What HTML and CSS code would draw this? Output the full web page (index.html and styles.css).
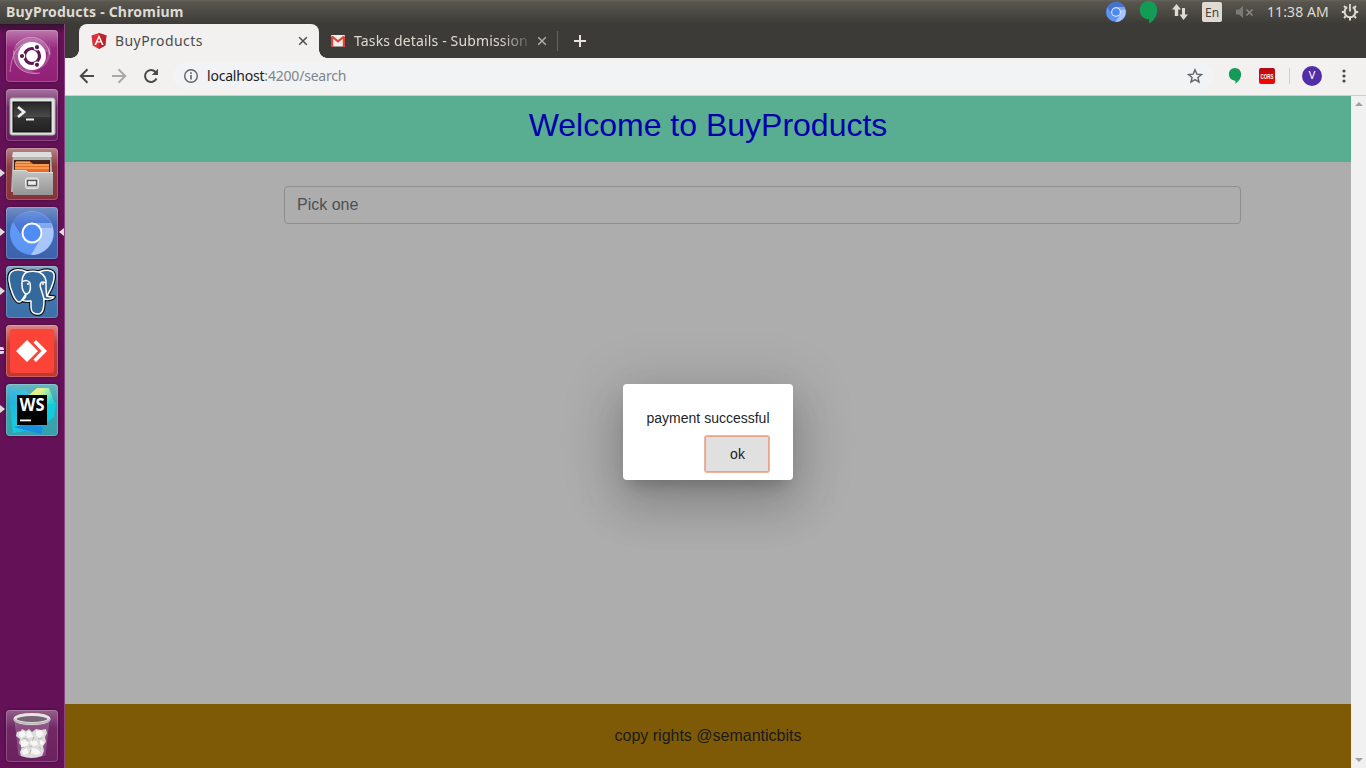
FILE: index.html
```html
<!DOCTYPE html>
<html lang="en">
<head>
<meta charset="utf-8">
<title>BuyProducts</title>
<link rel="stylesheet" href="styles.css">
</head>
<body>
<svg width="0" height="0" class="defs" aria-hidden="true">
  <defs>
    <linearGradient id="gloss" x1="0" y1="0" x2="0" y2="1"><stop offset="0" stop-color="#fff" stop-opacity=".4"/><stop offset=".35" stop-color="#fff" stop-opacity=".05"/><stop offset="1" stop-color="#fff" stop-opacity="0"/></linearGradient>
    <linearGradient id="screen" x1="0" y1="0" x2="0" y2="1"><stop offset="0" stop-color="#262626"/><stop offset=".5" stop-color="#4b4b4b"/><stop offset=".52" stop-color="#303030"/><stop offset="1" stop-color="#222"/></linearGradient>
    <linearGradient id="metal" x1="0" y1="0" x2="0" y2="1"><stop offset="0" stop-color="#c4c4c4"/><stop offset="1" stop-color="#959595"/></linearGradient>
    <linearGradient id="cyan" x1="0" y1="0" x2="1" y2="1"><stop offset="0" stop-color="#1fa0d8"/><stop offset=".5" stop-color="#12cfdc"/><stop offset="1" stop-color="#159be0"/></linearGradient>
    <linearGradient id="lemon" x1="0" y1="0" x2="1" y2=".8"><stop offset="0" stop-color="#f3ee6a"/><stop offset=".35" stop-color="#d6ee7a"/><stop offset=".7" stop-color="#1cd6d5"/></linearGradient>
    <symbol id="chromium" viewBox="0 0 44 44">
      <circle cx="22" cy="22" r="22" fill="#5b95f5"/>
      <path d="M3 11A22 22 0 0 1 41 12H22A10 10 0 0 0 13 27Z" fill="#4372d3"/>
      <path d="M41 12A22 22 0 0 1 21 44L31 27A10 10 0 0 0 22 12Z" fill="#a6c5fa"/>
      <path d="M22 12h19l1 5H31Z" fill="#7fa5ed"/>
      <circle cx="22" cy="22" r="10.500" fill="#fff"/><circle cx="22" cy="22" r="8.500" fill="#4a89f3"/>
    </symbol>
    <symbol id="hangouts" viewBox="0 0 20 24"><path d="M10 0C4.500 0 .8 4.200.8 9.500S4.800 19 10.700 19v4.500C16.500 20 19.200 14.500 19.200 9.500 19.200 4.200 15.500 0 10 0Z" fill="#149c57"/></symbol>
    <symbol id="close" viewBox="0 0 10 10"><path d="M1.200 1.200l7.600 7.600M8.800 1.200L1.200 8.800" fill="none" stroke="currentColor" stroke-width="1.500"/></symbol>
  </defs>
</svg>

<header class="menubar">
  <span class="window-title">BuyProducts - Chromium</span>
  <div class="indicators">
    <span class="slot"><svg width="20" height="20"><use href="#chromium"/></svg></span>
    <span class="slot"><svg width="19" height="23"><use href="#hangouts"/></svg></span>
    <span class="slot"><svg width="18" height="18" viewBox="0 0 18 18"><path d="M5.500 1L10 6.500H7.200V13H3.800V6.500H1ZM12.500 17L8.500 11.500h2.500V5h3v6.500h3Z" fill="#dfdbd2"/></svg></span>
    <span class="slot"><span class="lang">En</span></span>
    <span class="slot"><svg width="19" height="14" viewBox="0 0 19 14"><path d="M1 4.500h3l4-3.500v12L4 9.500H1Z" fill="#7c7a74"/><path d="M11.500 4.500l6 6M17.500 4.500l-6 6" stroke="#8b8983" stroke-width="1.500"/></svg></span>
    <time class="clock">11:38 AM</time>
    <svg class="gear" width="18" height="18" viewBox="0 0 18 18" fill="none" stroke="#dfdbd2"><path d="M6.200 4.200a5.400 5.400 0 1 0 5.600 0" stroke-width="2"/><path d="M9 1v7.500" stroke-width="1.800"/><path d="M3.200 9H.8M17.200 9h-2.400M4.700 13.300L3 15M13.300 13.300L15 15M9 15v2.500M4.700 4.700L3 3M13.300 4.700L15 3" stroke-width="2"/></svg>
  </div>
</header>

<div class="desktop">
  <nav class="launcher">
    <div class="tile tile-dash"><svg viewBox="0 0 52 52">
      <rect width="52" height="52" fill="url(#gloss)"/>
      <path d="M8 18C14 4 42 4 44 24L38 20C32 10 16 10 12 26Z" fill="#fff" opacity=".22"/>
      <path d="M43 14C50 32 32 46 18 39L28 40C38 38 42 30 43 14Z" fill="#fff" opacity=".2"/>
      <path d="M8 20C4 34 16 46 34 43 22 42 12 34 12 24Z" fill="#fff" opacity=".2"/>
      <g fill="none" stroke="#fff" opacity=".4"><path d="M10 15C20 2 42 6 44 25"/><path d="M8 20C5 36 18 46 34 43"/><path d="M4 42C6 22 12 14 25 12"/></g>
      <circle cx="26" cy="26" r="14" fill="#fff"/><circle cx="26" cy="26" r="7.500" fill="none" stroke="#5e1750" stroke-width="3.200"/>
      <g stroke="#fff" stroke-width="1.200"><path d="M29 20l4-6M19 26h-6M29 32l4 6"/><g fill="#5e1750"><circle cx="16" cy="26" r="2.700"/><circle cx="31" cy="17.200" r="2.700"/><circle cx="31" cy="34.800" r="2.700"/></g></g>
    </svg></div>
    <div class="tile tile-terminal"><svg viewBox="0 0 52 52">
      <rect width="52" height="52" fill="url(#gloss)"/><rect x="4" y="9" width="45" height="37" rx="2" fill="#e3e3df" stroke="#aaa"/><rect x="7" y="13" width="38" height="30" fill="url(#screen)" stroke="#111"/>
      <path d="M12 18l6 5-6 5" fill="none" stroke="#eee" stroke-width="2.800"/><path d="M20 30.500h8" stroke="#eee" stroke-width="2"/>
    </svg></div>
    <div class="tile tile-files running"><svg viewBox="0 0 52 52">
      <rect width="52" height="52" fill="url(#gloss)"/><path d="M7 4h38l2 40H5Z" fill="#b4b4b0"/><path d="M7 4h38l1 5H6Z" fill="#dededb"/><rect x="8" y="12" width="36" height="12" fill="#43251c"/><path d="M9 14h16l2 2h16v8H9Z" fill="#e96c20"/><path d="M9 17h34M9 20h34" stroke="#ffc98f"/><path d="M10 14h14" stroke="#ffe4b0"/><path d="M7 22h13l2 2h25v23H7Z" fill="url(#metal)"/><path d="M7 22.500h13l2 2h25" stroke="#ddd" fill="none"/>
      <rect x="19.500" y="30" width="13" height="10.500" rx="2" fill="#ccc" stroke="#e9e9e9"/><rect x="21.500" y="32.500" width="9" height="5" fill="#eee" stroke="#555" stroke-width="1.300"/>
    </svg></div>
    <div class="tile tile-chromium running active"><svg viewBox="0 0 52 52"><use href="#chromium" x="4" y="4" width="44" height="44"/><rect width="52" height="52" fill="url(#gloss)" opacity=".7"/></svg></div>
    <div class="tile tile-postgres running"><svg viewBox="0 0 52 52">
      <rect width="52" height="52" fill="url(#gloss)"/>
      <g stroke-linejoin="round" stroke-linecap="round"><path fill="#336a9b" stroke="#111" stroke-width="3.800" d="M25 35c0 7-1 12 6 13 6 1 7-6 7-15 4 1 9 0 10-2-3 0-5 0-7-1C46 22 52 7 45 5c-5-2-9 0-12 1-5-1-8-1-12 0C12 2 2 3 3 14c1 9 6 22 10 22 3 0 5-6 7-8 0 5-3 5-4 6 3 2 8 1 9 1Z"/>
      <g fill="none" stroke="#fff" stroke-width="1.500"><path fill="#336a9b" d="M25 35c0 7-1 12 6 13 6 1 7-6 7-15 4 1 9 0 10-2-3 0-5 0-7-1C46 22 52 7 45 5c-5-2-9 0-12 1-5-1-8-1-12 0C12 2 2 3 3 14c1 9 6 22 10 22 3 0 5-6 7-8 0 5-3 5-4 6 3 2 8 1 9 1Z"/><path d="M21 6c-6 3-5 10-5 13 0 5 2 9 5 9 3-1 4-5 3-11-2-3-5-3-8-1M33 6c6 3 8 8 7 14 0 4 0 7 1 10M40 17c-5-3-7 1-5 6 1 3 2 6 3 10"/></g><circle cx="22" cy="18" r="1" fill="#fff"/><circle cx="37" cy="18" r="1" fill="#fff"/></g>
    </svg></div>
    <div class="tile tile-anydesk double"><svg viewBox="0 0 52 52"><rect width="52" height="52" fill="url(#gloss)"/><rect x="4" y="4" width="44" height="44" rx="3" fill="#fc4338"/><path d="M10 26l11-11 11 11-11 11ZM27.500 17.500l2.500-2.500 11 11-11 11-2.500-2.500 8-8.500Z" fill="#fff"/></svg></div>
    <div class="tile tile-webstorm running"><svg viewBox="0 0 52 52">
      <path d="M2 4l16 2 9 6 9-8 8 12-4 22-4 12-17-3-12 2L5 31Z" fill="url(#cyan)"/><path d="M22 12L31 4h12l6 16-10 18Z" fill="url(#lemon)"/><path d="M41 21l9-3-2 15-8 6Z" fill="#0bcbdc"/><path d="M7 43l18-3 12 3-2 7Z" fill="#188ddd"/>
      <rect width="52" height="52" fill="url(#gloss)" opacity=".6"/><rect x="11" y="11" width="30" height="30" fill="#000"/><text x="26" y="27" text-anchor="middle" textLength="25" lengthAdjust="spacingAndGlyphs" class="ws">WS</text><rect x="14" y="35.500" width="11" height="1.800" fill="#fff"/>
    </svg></div>
    <div class="tile tile-trash"><svg viewBox="0 0 52 52">
      <rect width="52" height="52" fill="url(#gloss)" opacity=".7"/><path d="M9 10h34l-4 35q-13 4-26 0Z" fill="#e7d9e7" opacity=".22" stroke="#fff"/>
      <path d="M11 22l4-1 1-2 4 2 3-2 3 3 4-3 5 1 5-1 1 4-2 4 1 5-3 4 1 5-2 5q-10 4-21 0l-1-4 2-5-3-4 1-4-4-3Z" fill="#dcdcda"/>
      <g fill="#f6f6f4"><path d="M13 22l5-1 2 4-4 3-3-2ZM22 21l3 1 2 5-5 1-2-3ZM30 21l5-1 3 4-4 4-4-2ZM15 31l4-1 4 3-2 3-6 1ZM25 30l6 1 1 4-5 1-3-3ZM34 30l4 2-1 4-3-2ZM15 41l6-3 2 5-5 2ZM26 38l5 1 4 4-4 2-6-2Z"/></g>
      <g stroke="#b5b5b0" fill="none"><path d="M17 28l4 1 1 2M28 27l-2 4M32 29l4-1M23 37l3-1M33 37l2 2M23 44l2-4M15 38l3-1"/></g>
      <ellipse cx="26" cy="9" rx="17" ry="4.500" fill="#796378" stroke="#e4e4e0" stroke-width="3"/><path d="M8 9c2 6 34 6 36 0" fill="none" stroke="#b9b9b5" stroke-width="1.500"/>
    </svg></div>
  </nav>

  <main class="browser">
    <div class="tabstrip">
      <div class="tab tab-active">
        <svg class="favicon" width="16" height="16" viewBox="0 0 16 16"><path d="M8 0l7.500 2.600-1.200 10L8 16l-6.300-3.400L.5 2.600Z" fill="#dd3038"/><path d="M8 0l7.500 2.600-1.200 10L8 16Z" fill="#bd2530"/><path d="M8 1.800L3.400 12h1.700l1-2.400h3.800l1 2.400h1.700ZM8 5l1.300 3.200H6.700Z" fill="#fff" fill-rule="evenodd"/></svg>
        <span class="tab-title t1">BuyProducts</span>
        <svg class="tab-close" width="10" height="10"><use href="#close"/></svg>
      </div>
      <div class="tab tab-idle">
        <svg class="favicon" width="14" height="12" viewBox="0 0 14 12"><rect width="14" height="11.500" rx="1" fill="#eee"/><path d="M0 12V1.500L2 1l5 4 5-4 2 .5V12h-2.200V3.700L7 7.700 2.200 3.700V12Z" fill="#db4437"/></svg>
        <span class="tab-title t2">Tasks details - Submission</span>
        <svg class="tab-close" width="10" height="10"><use href="#close"/></svg>
      </div>
      <span class="tab-divider"></span>
      <svg class="new-tab" width="12" height="12" viewBox="0 0 12 12"><path d="M6 0v12M0 6h12" stroke="#e6e3dc" stroke-width="2"/></svg>
    </div>

    <div class="toolbar">
      <span class="slot"><svg width="16" height="16" viewBox="0 0 16 16" fill="none" stroke="#4a4a4a" stroke-width="2"><path d="M15 8H2M8.500 1.300L1.800 8l6.700 6.700"/></svg></span>
      <span class="slot"><svg width="16" height="16" viewBox="0 0 16 16" fill="none" stroke="#a8a8a8" stroke-width="2"><path d="M1 8h13M7.500 1.300L14.200 8l-6.700 6.700"/></svg></span>
      <span class="slot"><svg width="16" height="16" viewBox="0 0 16 16"><path d="M13.500 10.500A6 6 0 1 1 12.500 4L14 5.500" fill="none" stroke="#4a4a4a" stroke-width="2"/><path d="M15 .8V7H8.800Z" fill="#4a4a4a"/></svg></span>
      <div class="omnibox">
        <svg width="16" height="16" viewBox="0 0 16 16" fill="none" stroke="#5f6368"><circle cx="8" cy="8" r="6.300" stroke-width="1.400"/><path d="M8 7v4.500M8 4.300v1.600" stroke-width="1.600"/></svg>
        <span class="url"><span class="host">localhost</span>:4200/search</span>
        <svg class="star" width="16" height="16" viewBox="0 0 16 16"><path d="M8 1.800l1.800 4.300 4.700.4-3.600 3 1.100 4.600L8 11.600l-4 2.500 1.100-4.600-3.600-3 4.700-.4Z" fill="none" stroke="#5f6368" stroke-width="1.400"/></svg>
      </div>
      <span class="slot"><svg width="14" height="16" viewBox="0 0 20 24"><use href="#hangouts" width="20" height="24"/></svg></span>
      <span class="slot"><span class="cors"><svg width="14" height="16" viewBox="0 0 14 16"><text x="7" y="10.700" text-anchor="middle" textLength="13" lengthAdjust="spacingAndGlyphs" class="cors-text">CORS</text></svg></span></span>
      <span class="tool-divider"></span>
      <span class="slot"><span class="avatar">V</span></span>
      <span class="slot"><svg width="4" height="14" viewBox="0 0 4 14" fill="#4a4a4a"><circle cx="2" cy="2" r="1.600"/><circle cx="2" cy="7" r="1.600"/><circle cx="2" cy="12" r="1.600"/></svg></span>
    </div>

    <div class="viewport">
      <div class="page">
        <div class="banner"><h1 class="heading">Welcome to BuyProducts</h1></div>
        <div class="content"><div class="picker">Pick one</div></div>
        <footer class="footer">copy rights @semanticbits</footer>
        <div class="dialog" role="dialog"><p class="message">payment successful</p><button class="ok">ok</button></div>
      </div>
      <div class="scrollbar">
        <svg width="8" height="4" viewBox="0 0 8 4"><path d="M4 0l4 4H0Z" fill="#a0a0a0"/></svg>
        <svg width="8" height="4" viewBox="0 0 8 4"><path d="M0 0h8L4 4Z" fill="#a0a0a0"/></svg>
      </div>
    </div>
  </main>
</div>
</body>
</html>
```
FILE: styles.css
```css
* { box-sizing: border-box; }
html, body { height: 100%; }
body { margin: 0; overflow: hidden; display: flex; flex-direction: column; font-family: "Noto Sans", sans-serif; }
svg { display: block; flex: none; }
.defs { position: absolute; }

.menubar { height: 24px; flex: none; display: flex; align-items: center; justify-content: space-between; padding: 0 7px 0 6px; background: linear-gradient(#64615a 0, #59564e 2px, #3c3b37 24px); color: #dfdbd2; }
.window-title { font-size: 14px; font-weight: 700; letter-spacing: .2px; line-height: 24px; white-space: nowrap; }
.indicators { display: flex; align-items: center; height: 24px; }
.slot { width: 32px; flex: none; display: flex; align-items: center; justify-content: center; }
.lang { width: 20px; height: 20px; border-radius: 2px; background: #dfdbd2; color: #45433e; font-size: 12px; line-height: 21px; text-align: center; }
.clock { width: 72px; margin-left: 7px; padding-bottom: 1px; font-size: 14px; letter-spacing: .1px; white-space: nowrap; }
.gear { margin-left: 2px; }

.desktop { flex: 1; min-height: 0; display: flex; }
.launcher { width: 65px; flex: none; display: flex; flex-direction: column; gap: 7px; padding: 6px 0 6px 6px; background: linear-gradient(#35102f 0, #651157 9px, #651157); border-right: 1px solid #8a4480; }
.tile { position: relative; width: 52px; height: 52px; flex: none; border-radius: 4px; box-shadow: 0 0 3px rgba(20,0,20,.5), inset 0 0 0 1px rgba(255,255,255,.2); }
.tile svg { width: 52px; height: 52px; border-radius: 4px; }
.tile-dash { background: #922078; }
.tile-terminal { background: #6b1c60; }
.tile-files { background: #87323b; }
.tile-chromium { background: #3d63ae; }
.tile-postgres { background: #3c71a8; }
.tile-anydesk { background: #bd3934; }
.tile-webstorm { background: #38a0ad; }
.tile-trash { background: #6c2160; margin-top: auto; }
.running::before { content: ""; position: absolute; left: -6px; top: 21px; border: solid transparent; border-width: 4px 0 4px 5px; border-left-color: #ddd; }
.double::before { content: ""; position: absolute; left: -6px; top: 22px; width: 4px; height: 7px; background: linear-gradient(#ddd 3px, transparent 3px 4px, #ddd 4px); border-radius: 0 2px 2px 0; }
.active::after { content: ""; position: absolute; right: -6px; top: 21px; border: solid transparent; border-width: 4px 5px 4px 0; border-right-color: #ddd; }
.ws { font: 700 18px "Open Sans", sans-serif; fill: #fff; }

.browser { flex: 1; min-width: 0; display: flex; flex-direction: column; }
.tabstrip { height: 34px; flex: none; display: flex; align-items: center; padding-left: 14px; background: #3c3b37; }
.tab { height: 34px; display: flex; align-items: center; font-size: 14px; white-space: nowrap; }
.tab-active { position: relative; width: 240px; padding: 0 11px 0 12px; background: #f2f1f0; color: #4c4c4c; border-radius: 8px 8px 0 0; }
.tab-active::before, .tab-active::after { content: ""; position: absolute; bottom: 0; width: 8px; height: 8px; }
.tab-active::before { left: -8px; background: radial-gradient(circle at 0 0, transparent 7.5px, #f2f1f0 8px); }
.tab-active::after { right: -8px; background: radial-gradient(circle at 100% 0, transparent 7.5px, #f2f1f0 8px); }
.tab-idle { width: 238px; padding: 0 10px 0 12px; color: #dfdbd2; }
.tab-title { margin-left: 8px; padding-bottom: 2px; flex: 1; overflow: hidden; }
.t1 { letter-spacing: .43px; }
.t2 { margin-left: 9px; margin-right: 9px; letter-spacing: .15px; mask-image: linear-gradient(90deg, #000 84%, rgba(0,0,0,.2)); }
.tab-close { color: #4c4c4c; }
.tab-idle .tab-close { color: #b0ada6; }
.tab-divider { width: 1px; height: 20px; background: #66645f; }
.new-tab { margin-left: 16px; }

.toolbar { height: 38px; flex: none; display: flex; align-items: center; padding: 0 6px 1px; background: #f2f1f0; border-bottom: 1px solid #d0cfcd; }
.omnibox { width: 1040px; height: 28px; margin-left: 6px; margin-right: 6px; display: flex; align-items: center; padding: 0 10px; border-radius: 14px; background: #f1f3f4; }
.url { margin-left: 8px; padding-bottom: 2px; font-size: 14px; letter-spacing: -.2px; color: #80868b; white-space: nowrap; }
.host { color: #202124; }
.star { margin-left: auto; }
.cors { width: 16px; height: 16px; padding: 0 1px; border-radius: 2px; background: linear-gradient(#a90d10, #cc0b0c 4px, #cc0b0c 11px, #ee0908 12px); }
.cors-text { font: 700 7.5px "Liberation Sans", sans-serif; fill: #fff; }
.tool-divider { width: 1px; height: 16px; margin: 0 6px; background: #cfcfcf; }
.avatar { width: 20px; height: 20px; border-radius: 50%; background: #512da8; color: #fff; font: 11px/20px Roboto, sans-serif; text-align: center; }

.viewport { flex: 1; min-height: 0; display: flex; font-family: "Liberation Sans", sans-serif; }
.page { position: relative; flex: 1; display: flex; flex-direction: column; background: #adadad; }
.banner { height: 66px; padding-top: 10px; background: #59ad91; text-align: center; }
.heading { margin: 0; font-size: 32px; line-height: 38px; font-weight: 400; color: #0000ad; }
.content { flex: 1; padding: 24px 110px 0 219px; }
.picker { height: 38px; padding: 0 12px; border: 1px solid #8c8f92; border-radius: 4px; font-size: 16px; line-height: 36px; color: #4b5054; }
.footer { height: 64px; background: #7e5a07; color: #191b1d; font-size: 16px; line-height: 63px; text-align: center; }
.dialog { position: absolute; left: 50%; top: 50%; width: 170px; height: 96px; transform: translate(-50%, -50%); padding: 24px 23.5px 8px; border-radius: 4px; background: #fff; box-shadow: 0 11px 15px -7px rgba(0,0,0,.2), 0 24px 46px 4px rgba(0,0,0,.14), 0 9px 58px 10px rgba(0,0,0,.12); display: flex; flex-direction: column; align-items: flex-end; justify-content: space-between; }
.message { margin: 0; font-size: 14px; line-height: 20px; color: #212529; white-space: nowrap; }
.ok { width: 64px; height: 36px; margin-right: .5px; padding: 0 0 0 1px; border: 0; border-radius: 2px; background: #e0e0e0; color: #212121; font: 14px/36px "Liberation Sans", sans-serif; box-shadow: 0 0 0 1px #f0b39d, inset 0 0 0 1px #e8a48b; }
.scrollbar { width: 15px; flex: none; display: flex; flex-direction: column; align-items: center; justify-content: space-between; padding: 6px 0; background: #f1f1f1; }
```
